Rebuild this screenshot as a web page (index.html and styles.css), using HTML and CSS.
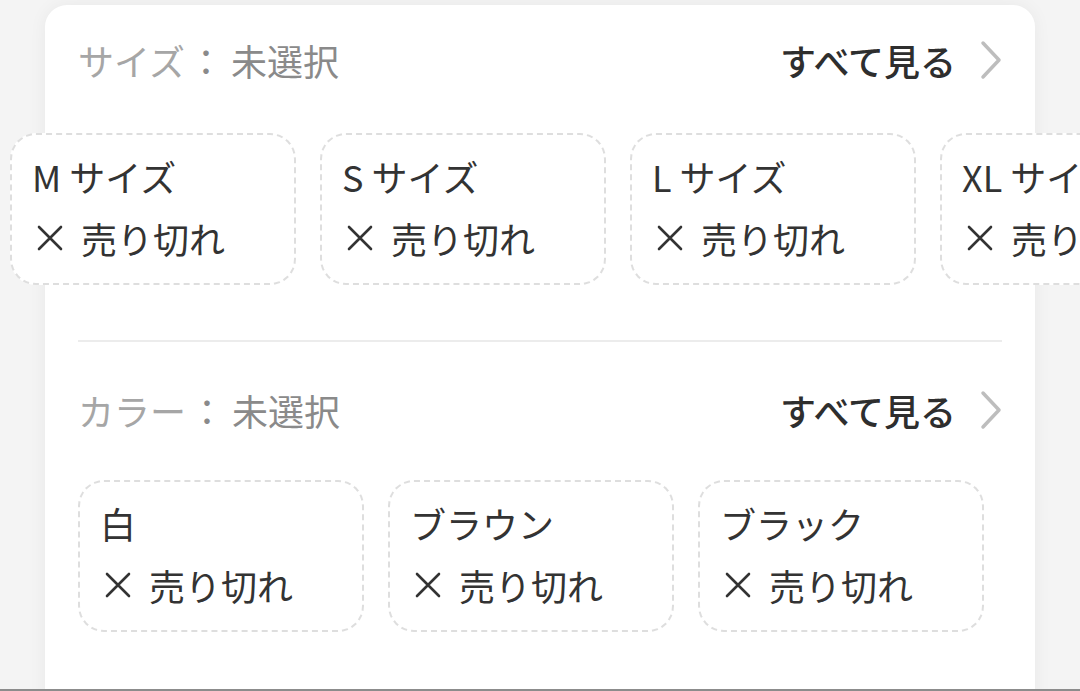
FILE: index.html
```html
<!DOCTYPE html>
<html lang="ja">
  <head>
    <meta charset="UTF-8" />
    <meta name="viewport" content="width=device-width, initial-scale=1.0" />
    <title>商品オプション</title>
    <link rel="stylesheet" href="styles.css">
  </head>
  <body>
    <div class="screen">
      <div class="card">
        <div class="section-head">
          <div class="section-title"><span class="label">サイズ</span><span class="value"><span class="sep">：</span>未選択</span></div>
          <a class="see-all" href="#">
            すべて見る
            <svg class="chevron" width="22" height="40" viewBox="0 0 22 40">
              <polyline points="3,3 19,20 3,37" />
            </svg>
          </a>
        </div>
        <div class="chips chips-scroll">
          <div class="chip">
            <div class="chip-name">M サイズ</div>
            <div class="chip-stock"><svg class="cross" width="26" height="26" viewBox="0 0 26 26"><path d="M2 2 L24 24 M24 2 L2 24" /></svg>売り切れ</div>
          </div>
          <div class="chip">
            <div class="chip-name">S サイズ</div>
            <div class="chip-stock"><svg class="cross" width="26" height="26" viewBox="0 0 26 26"><path d="M2 2 L24 24 M24 2 L2 24" /></svg>売り切れ</div>
          </div>
          <div class="chip">
            <div class="chip-name">L サイズ</div>
            <div class="chip-stock"><svg class="cross" width="26" height="26" viewBox="0 0 26 26"><path d="M2 2 L24 24 M24 2 L2 24" /></svg>売り切れ</div>
          </div>
          <div class="chip">
            <div class="chip-name">XL サイズ</div>
            <div class="chip-stock"><svg class="cross" width="26" height="26" viewBox="0 0 26 26"><path d="M2 2 L24 24 M24 2 L2 24" /></svg>売り切れ</div>
          </div>
        </div>

        <hr class="divider" />

        <div class="section-head">
          <div class="section-title"><span class="label">カラー</span><span class="value"><span class="sep">：</span>未選択</span></div>
          <a class="see-all" href="#">
            すべて見る
            <svg class="chevron" width="22" height="40" viewBox="0 0 22 40">
              <polyline points="3,3 19,20 3,37" />
            </svg>
          </a>
        </div>
        <div class="chips">
          <div class="chip">
            <div class="chip-name">白</div>
            <div class="chip-stock"><svg class="cross" width="26" height="26" viewBox="0 0 26 26"><path d="M2 2 L24 24 M24 2 L2 24" /></svg>売り切れ</div>
          </div>
          <div class="chip">
            <div class="chip-name">ブラウン</div>
            <div class="chip-stock"><svg class="cross" width="26" height="26" viewBox="0 0 26 26"><path d="M2 2 L24 24 M24 2 L2 24" /></svg>売り切れ</div>
          </div>
          <div class="chip">
            <div class="chip-name">ブラック</div>
            <div class="chip-stock"><svg class="cross" width="26" height="26" viewBox="0 0 26 26"><path d="M2 2 L24 24 M24 2 L2 24" /></svg>売り切れ</div>
          </div>
        </div>
      </div>
    </div>
  </body>
</html>
```

FILE: styles.css
```css
html,
body {
  margin: 0;
  padding: 0;
}
body {
  background: #f4f4f4;
  font-family: "Noto Sans CJK JP", "Noto Sans", sans-serif;
  color: #333;
}
.screen {
  height: 691px;
  box-sizing: border-box;
  border-bottom: 2px solid #8c8c8c;
  overflow: hidden;
  padding-top: 5px;
}
.card {
  margin: 0 45px;
  background: #fff;
  border-radius: 22px;
  padding: 30px 33px 120px;
  box-shadow: 0 0 18px rgba(0, 0, 0, 0.05);
}
.section-head {
  display: flex;
  justify-content: space-between;
  align-items: center;
  height: 50px;
}
.section-title {
  font-size: 36px;
  line-height: 50px;
  white-space: nowrap;
}
.section-title .label {
  color: #a6a6a6;
}
.section-title .value {
  color: #8a8a8a;
}
.section-title .sep {
  margin: 0 7px 0 3px;
}
.see-all {
  display: flex;
  align-items: center;
  gap: 24px;
  font-size: 36px;
  font-weight: 500;
  color: #2e2e2e;
  text-decoration: none;
  line-height: 50px;
}
.chevron {
  display: block;
}
.chevron polyline {
  fill: none;
  stroke: #bdbdbd;
  stroke-width: 3.5;
  stroke-linecap: round;
  stroke-linejoin: round;
}
.chips {
  display: flex;
  gap: 24px;
  margin-top: 45px;
}
.chips-scroll {
  margin-top: 48px;
  margin-left: -68px;
  margin-right: -78px;
  overflow: hidden;
}
.chip {
  flex: 0 0 286px;
  box-sizing: border-box;
  height: 152px;
  padding: 10px 20px;
  border: 2px dashed #dedede;
  border-radius: 26px;
  background: #fff;
  font-size: 36px;
  color: #333;
}
.chip-name,
.chip-stock {
  line-height: 62px;
  white-space: nowrap;
}
.chip-stock {
  display: flex;
  align-items: center;
}
.cross {
  margin: 0 18px 0 5px;
}
.cross path {
  stroke: #333;
  stroke-width: 2.6;
  stroke-linecap: round;
  fill: none;
}
.divider {
  border: none;
  border-top: 2px solid #ececec;
  margin: 55px 0 43px;
}
```
